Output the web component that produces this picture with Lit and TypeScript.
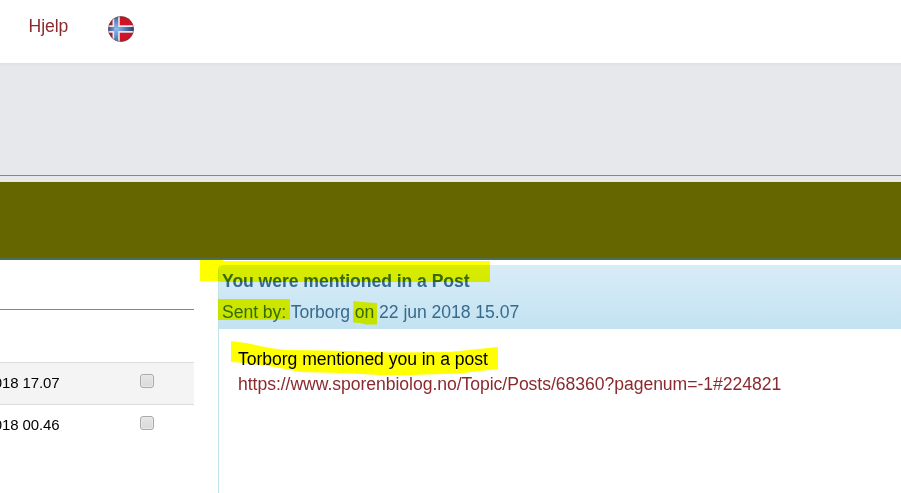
import { LitElement, html, css } from "lit";
import { customElement } from "lit/decorators.js";

@customElement("norway-flag")
class NorwayFlag extends LitElement {
  static styles = css`
    :host { display: block; width: 26px; height: 26px; }
    svg { display: block; }
  `;
  render() {
    return html`<svg width="26" height="26" viewBox="0 0 26 26">
      <defs>
        <clipPath id="c"><circle cx="13" cy="13" r="12.8" /></clipPath>
        <radialGradient id="r" cx=".55" cy=".5" r=".5">
          <stop offset=".7" stop-color="#d31226" />
          <stop offset="1" stop-color="#96242b" />
        </radialGradient>
        <linearGradient id="b">
          <stop offset="0" stop-color="#35558c" />
          <stop offset=".35" stop-color="#8cb8ee" />
          <stop offset=".6" stop-color="#5f88c4" />
          <stop offset="1" stop-color="#263a6c" />
        </linearGradient>
        <linearGradient id="v" x2="0" y2="1">
          <stop offset="0" stop-color="#4a5f90" />
          <stop offset=".5" stop-color="#8fb9ec" />
          <stop offset="1" stop-color="#3f6cb0" />
        </linearGradient>
      </defs>
      <g clip-path="url(#c)">
        <rect width="26" height="26" fill="url(#r)" />
        <path d="M4.500 0h7.300v9.300h14.200v7.400H11.800V26H4.500v-9.300H0v-7.400h4.500z" fill="#e3e8f2" />
        <rect y="11" width="26" height="4" fill="url(#b)" />
        <rect x="6.2" width="4" height="26" fill="url(#v)" />
      </g>
      <circle cx="13" cy="13" r="12.5" fill="none" stroke="#70404c" stroke-opacity=".4" />
    </svg>`;
  }
}

@customElement("app-root")
class AppRoot extends LitElement {
  static styles = css`
    :host {
      display: flex; flex-direction: column; position: relative; isolation: isolate;
      width: 901px; height: 493px; overflow: hidden; background: #fff;
      font: 17.6px/24px "Liberation Sans", Arial, sans-serif; letter-spacing: -0.05px; color: #000;
    }
    * { box-sizing: border-box; }
    a { color: #8b2a2e; text-decoration: none; white-space: nowrap; }
    .top { display: flex; height: 63px; flex: none; padding: 14px 0 0 28.5px; }
    .help { width: 79.5px; }
    .flag { margin-top: 2px; }
    .band { flex: none; height: 119px; background: linear-gradient(#dfe0e3, #e7e8ec 4px); padding-top: 112px; }
    .rule { height: 1px; background: #85868c; }
    .olive { flex: none; height: 78px; background: #666600; border-bottom: 2px solid #4d6e5b; }
    .main { display: flex; flex: 1; min-height: 0; }
    .list { width: 194px; padding-top: 49px; font-size: 15px; letter-spacing: 0.12px; }
    .head { height: 53px; border-top: 1px solid #858585; }
    .row { height: 42px; border-top: 1px solid #dcdcdc; display: flex; align-items: flex-start; }
    .row.alt { background: #f4f4f4; }
    .date { width: 59.5px; display: flex; justify-content: flex-end; white-space: nowrap; padding-top: 8px; letter-spacing: -0.12px; }
    .box {
      width: 14px; height: 14px; margin: 11px 0 0 80.5px; border: 1px solid #a9a9a9; border-radius: 3px;
      background: linear-gradient(#e6e6e6, #dadada); box-shadow: inset 0 0 0 1px #e9e9e9;
    }
    .panel { flex: 1; margin: 5px 0 0 24px; border-left: 1px solid #bfe3e6; border-radius: 5px 0 0 0; }
    .title {
      height: 64px; padding: 4px 0 0 3px; color: #376b8c; border-radius: 5px 0 0 0;
      background: linear-gradient(#d9ecf8, #c3e2f1);
    }
    .title b { display: block; height: 31px; }
    .t { display: inline-block; white-space: nowrap; }
    .body { padding: 18px 0 0 19px; line-height: 25px; }
    .body .t, .body a { display: block; }
    .marks { position: absolute; inset: 0; mix-blend-mode: multiply; }
  `;
  render() {
    return html`
      <div class="top"><a class="help"><span>Hjelp</span></a><norway-flag class="flag"></norway-flag></div>
      <div class="band"><div class="rule"></div></div>
      <div class="olive"></div>
      <div class="main">
        <div class="list">
          <div class="head"></div>
          <div class="row alt"><span class="date">018 17.07</span><span class="box"></span></div>
          <div class="row"><span class="date">018 00.46</span><span class="box"></span></div>
        </div>
        <div class="panel">
          <div class="title">
            <b>You were mentioned in a Post</b>
            <span class="t">Sent by: Torborg on 22 jun 2018 15.07</span>
          </div>
          <div class="body">
            <span class="t">Torborg mentioned you in a post</span>
            <a>https://www.sporenbiolog.no/Topic/Posts/68360?pagenum=-1#224821</a>
          </div>
        </div>
      </div>
      <svg class="marks" width="901" height="493">
        <path fill="#ff0" d="M200 260H222L224 261H490V282H219V281H200Z" />
        <path fill="#ff0" d="M218 299H290V319.500L218 320Z" />
        <path fill="#ff0" d="M353.500 301L362 302L377 303V324.500L366 324.500L360 323L353 322.500Z" />
        <path fill="#ff0" d="M231 341L246 343L270 348L285 350L330 350.500L390 352.500L450 352L478 349L498 347V369L480 371L460 373.500L410 375L380 375L340 373L300 372L275 367L246 363L231 362Z" />
      </svg>
    `;
  }
}
